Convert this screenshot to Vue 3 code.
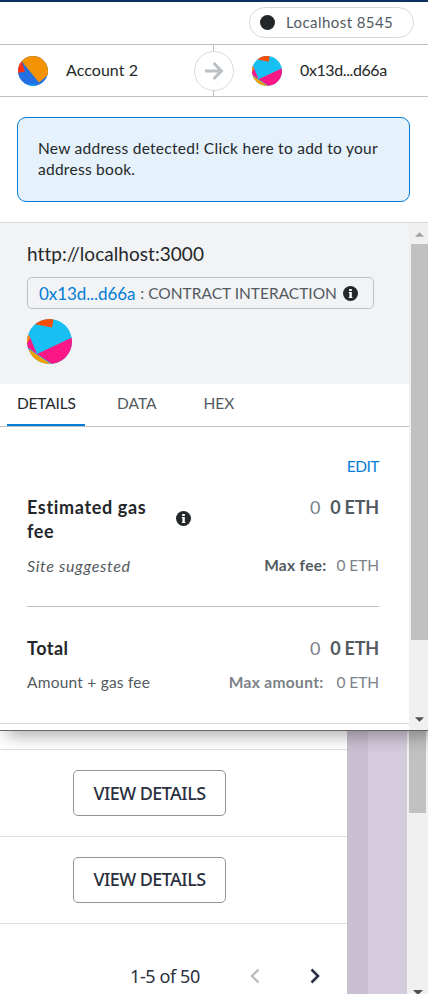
<script setup>
const tabs = [
  { label: 'DETAILS', active: true },
  { label: 'DATA', active: false },
  { label: 'HEX', active: false },
]
const rows = [1, 2]
</script>

<template>
  <main class="screen">
    <section class="popup">
      <header class="network-bar">
        <div class="network"><span class="dot"></span><span>Localhost 8545</span></div>
      </header>

      <div class="accounts">
        <div class="account">
          <svg class="avatar" viewBox="0 0 30 30">
            <clipPath id="a"><circle cx="15" cy="15" r="15" /></clipPath>
            <g clip-path="url(#a)">
              <rect width="30" height="30" fill="#246fe2" />
              <path d="M3.5 5 8 0H30V19L21 26.5Z" fill="#f39303" />
              <path d="M0 5H3.5L7 15.5 0 17Z" fill="#fb3110" />
              <path d="M6 29Q13 27.3 20 29V30H6Z" fill="#03a9f5" />
            </g>
          </svg>
          <span class="from-name">Account 2</span>
        </div>
        <div class="arrow">
          <svg viewBox="0 0 20 20">
            <path d="M1 10H17M9.6 2 17.4 10 9.6 18" fill="none" stroke="#bbc0c5" stroke-width="3" />
          </svg>
        </div>
        <div class="account to">
          <svg class="avatar" viewBox="0 0 45 45">
            <clipPath id="b"><circle cx="22.5" cy="22.5" r="22.5" /></clipPath>
            <g clip-path="url(#b)">
              <rect width="45" height="45" fill="#18bff2" />
              <path d="M7 5 25 8.5 26.5 0H5Z" fill="#fb4d03" />
              <path d="M45 18.5 10 35 25 45H45Z" fill="#fc1786" />
              <path d="M0 15 2.5 17 10 35 0 28Z" fill="#fc1786" />
              <path d="M0 16H2L3 19 0 24ZM0 29 25 46H0Z" fill="#f99e01" />
            </g>
          </svg>
          <span class="to-name">0x13d...d66a</span>
        </div>
      </div>

      <div class="notice-wrap">
        <div class="notice">New address detected! Click here to add to your<br />address book.</div>
      </div>

      <div class="scroller">
        <div class="content">
          <div class="summary">
            <div class="origin">http://localhost:3000</div>
            <div class="action">
              <span class="address">0x13d...d66a</span><span class="method">: CONTRACT INTERACTION</span>
              <svg class="info" viewBox="0 0 15 15">
                <circle cx="7.5" cy="7.5" r="7.5" fill="#24272a" />
                <path d="M6.2 3H8.8V5H6.2ZM5.8 6.1H8.8V11H9.4V12H5.8V11H6.4V7.1H5.8Z" fill="#fff" />
              </svg>
            </div>
            <svg class="avatar large" viewBox="0 0 45 45">
              <g clip-path="url(#b)">
                <rect width="45" height="45" fill="#18bff2" />
                <path d="M7 5 25 8.5 26.5 0H5Z" fill="#fb4d03" />
                <path d="M45 18.5 10 35 25 45H45Z" fill="#fc1786" />
                <path d="M0 15 2.5 17 10 35 0 28Z" fill="#fc1786" />
                <path d="M0 16H2L3 19 0 24ZM0 29 25 46H0Z" fill="#f99e01" />
              </g>
            </svg>
          </div>

          <nav class="tabs">
            <span v-for="t in tabs" :key="t.label" class="tab" :class="{ active: t.active }">{{ t.label }}</span>
          </nav>

          <div class="details">
            <div class="edit">EDIT</div>
            <div class="fee">
              <div class="line">
                <div class="heading">
                  <span class="title gas">Estimated gas<br />fee</span>
                  <svg class="info" viewBox="0 0 15 15">
                    <circle cx="7.5" cy="7.5" r="7.5" fill="#24272a" />
                    <path d="M6.2 3H8.8V5H6.2ZM5.8 6.1H8.8V11H9.4V12H5.8V11H6.4V7.1H5.8Z" fill="#fff" />
                  </svg>
                </div>
                <div class="value"><span class="fiat">0</span><b>0 ETH</b></div>
              </div>
              <div class="sub">
                <em>Site suggested</em>
                <div class="max"><b class="max-fee">Max fee:</b><span>0 ETH</span></div>
              </div>
            </div>
            <div class="total">
              <div class="line">
                <span class="title">Total</span>
                <div class="value"><span class="fiat">0</span><b>0 ETH</b></div>
              </div>
              <div class="sub">
                <span class="note">Amount + gas fee</span>
                <div class="max"><b class="max-amount">Max amount:</b><span>0 ETH</span></div>
              </div>
            </div>
          </div>
          <div class="end"></div>
        </div>
        <div class="scrollbar">
          <svg class="caret" viewBox="0 0 10 5"><path d="M0 5 5 0 10 5Z" fill="#a3a3a3" /></svg>
          <div class="thumb"></div>
          <svg class="caret down" viewBox="0 0 10 5"><path d="M0 0 5 5 10 0Z" fill="#505050" /></svg>
        </div>
      </div>
    </section>

    <section class="page">
      <div class="table">
        <div class="cut-row"></div>
        <div v-for="r in rows" :key="r" class="row"><button class="view">VIEW DETAILS</button></div>
        <footer class="pager">
          <span class="range">1-5 of 50</span>
          <svg class="chev prev" viewBox="0 0 10 16"><path d="M8.5 1.5 2 8 8.5 14.5" fill="none" stroke="#bdbdbd" stroke-width="2.4" /></svg>
          <svg class="chev" viewBox="0 0 10 16"><path d="M1.5 1.5 8 8 1.5 14.5" fill="none" stroke="#2b3040" stroke-width="2.6" /></svg>
        </footer>
      </div>
      <div class="shade"></div>
      <div class="backdrop"></div>
      <div class="page-bar">
        <div class="page-thumb"></div>
        <svg class="page-caret" viewBox="0 0 10 5"><path d="M0 0 5 5 10 0Z" fill="#505050" /></svg>
      </div>
    </section>
  </main>
</template>

<style>
body { margin: 0; background: #fff; overflow: hidden; }
</style>

<style scoped>
* { box-sizing: border-box; }
.screen { width: 428px; height: 994px; overflow: hidden; font: 15.5px/21px Lato, sans-serif; color: #24272a; white-space: nowrap; }
.screen svg { display: block; flex: none; }
.popup { position: relative; z-index: 1; height: 731px; display: flex; flex-direction: column; background: #fff; border-top: 2px solid #0d315f; border-bottom: 1px solid #666; box-shadow: 8px 4px 16px 1px rgba(0, 0, 0, .32); }
.network-bar { height: 42px; padding: 5px 14px 0 0; display: flex; justify-content: flex-end; align-items: flex-start; }
.network { width: 165px; height: 31px; border: 1px solid #d6d9dc; border-radius: 16px; display: flex; align-items: center; padding-left: 10px; gap: 11px; color: #535a61; font-size: 15px; letter-spacing: .43px; }
.dot { width: 15px; height: 15px; border-radius: 50%; background: #24272a; }
.accounts { height: 53px; border-top: 1px solid #bbc0c5; border-bottom: 1px solid #bbc0c5; display: grid; grid-template-columns: 194px 40px 1fr; align-items: center; font-size: 16px; }
.account { display: flex; align-items: center; gap: 18px; padding-left: 18px; }
.account span { padding-bottom: 2px; }
.avatar { width: 30px; height: 30px; }
.from-name { letter-spacing: .05px; }
.to-name { letter-spacing: -.4px; }
.arrow { width: 40px; height: 51px; display: grid; place-items: center; background: linear-gradient(#bbc0c5, #bbc0c5) 19px 0 / 1px 100% no-repeat; }
.arrow svg { box-sizing: border-box; width: 40px; height: 40px; padding: 9px; border: 1px solid #d6d9dc; border-radius: 50%; background: #fff; }
.notice-wrap { height: 125px; padding: 20px 18px 0 17px; }
.notice { height: 85px; border: 1px solid #037dd6; border-radius: 9px; background: #e5f1fb; padding: 20px; letter-spacing: .27px; }
.scroller { flex: 1; display: flex; border-top: 1px solid #d6d9dc; }
.content { width: 409px; }
.summary { height: 161px; background: #f2f3f5; padding: 19px 27px 0; }
.origin { font-size: 19px; line-height: 24px; letter-spacing: .05px; }
.action { width: 347px; height: 32px; margin: 11px 0 10px; border: 1px solid #bbc0c5; border-radius: 5px; display: flex; align-items: center; padding-left: 11px; }
.address { font-size: 17px; color: #037dd6; margin-right: 5px; letter-spacing: -.08px; }
.method { color: #535a61; margin-right: 6px; }
.info { width: 15px; height: 15px; }
.avatar.large { width: 45px; height: 45px; }
.tabs { height: 43px; border-bottom: 1px solid #bbc0c5; display: flex; gap: 11px; padding-left: 7px; }
.tab { height: 42px; padding: 9px 10px 0; color: #535a61; }
.tab + .tab { padding-right: 15px; padding-left: 21px; }
.tab.active { color: #24272a; border-bottom: 2px solid #037dd6; width: 78px; letter-spacing: -.2px; }
.details { padding: 29px 30px 0 27px; }
.edit { text-align: right; color: #037dd6; letter-spacing: -.5px; }
.fee { height: 130px; padding-top: 18px; border-bottom: 1px solid #bbc0c5; }
.line { display: flex; justify-content: space-between; font-size: 18px; line-height: 24px; }
.heading { display: flex; align-items: center; width: 164px; justify-content: space-between; }
.heading .info { margin-bottom: 2px; }
.title { font-weight: 700; letter-spacing: .5px; }
.title.gas { letter-spacing: .65px; }
.value { display: flex; gap: 10px; color: #535a61; letter-spacing: -.2px; }
.fiat { color: #7b8187; }
.sub { display: flex; justify-content: space-between; margin-top: 12px; color: #535a61; }
.sub em { font-size: 16px; letter-spacing: .65px; }
.note { letter-spacing: .22px; }
.max { display: flex; color: #7b8187; letter-spacing: -.1px; }
.max-fee { color: #535a61; letter-spacing: .3px; margin-right: 10px; }
.max-amount { letter-spacing: .35px; margin-right: 13px; }
.total { height: 116px; padding-top: 29px; }
.end { border-top: 1px solid #d6d9dc; }
.scrollbar { width: 19px; background: #f0f0f0; display: flex; flex-direction: column; align-items: flex-end; padding: 9px 0 8px; }
.caret { width: 9px; height: 5px; margin-right: 4px; }
.thumb { width: 17px; height: 396px; margin-top: 7px; background: #c1c1c1; }
.caret.down { margin-top: auto; }
.page { height: 263px; display: flex; font-family: "Noto Sans", sans-serif; color: #2b3040; }
.table { width: 347px; }
.cut-row { height: 19px; border-bottom: 1px solid #dedfe1; }
.row { height: 87px; border-bottom: 1px solid #dedfe1; padding: 20px 0 0 73px; }
.view { display: block; width: 153px; height: 46px; padding: 0; border: 1px solid #90929c; border-radius: 5px; background: #fff; color: #2b3040; font: 500 18px/44px "Noto Sans", sans-serif; letter-spacing: -.55px; }
.row + .row .view { line-height: 42px; padding-bottom: 2px; }
.pager { display: flex; align-items: center; padding: 40px 0 0 130px; font-size: 18px; line-height: 24px; }
.range { width: 120px; letter-spacing: -.4px; }
.chev { width: 10px; height: 16px; }
.chev.prev { margin-right: 50px; }
.shade { width: 21px; background: #c9c0d1; }
.backdrop { width: 39px; background: #d4cbdc; }
.page-bar { width: 21px; background: #f0f0f0; padding-left: 2px; display: flex; flex-direction: column; }
.page-thumb { width: 17px; height: 82px; background: #c1c1c1; }
.page-caret { width: 10px; height: 5px; margin: auto 0 -1px 4px; }
</style>
